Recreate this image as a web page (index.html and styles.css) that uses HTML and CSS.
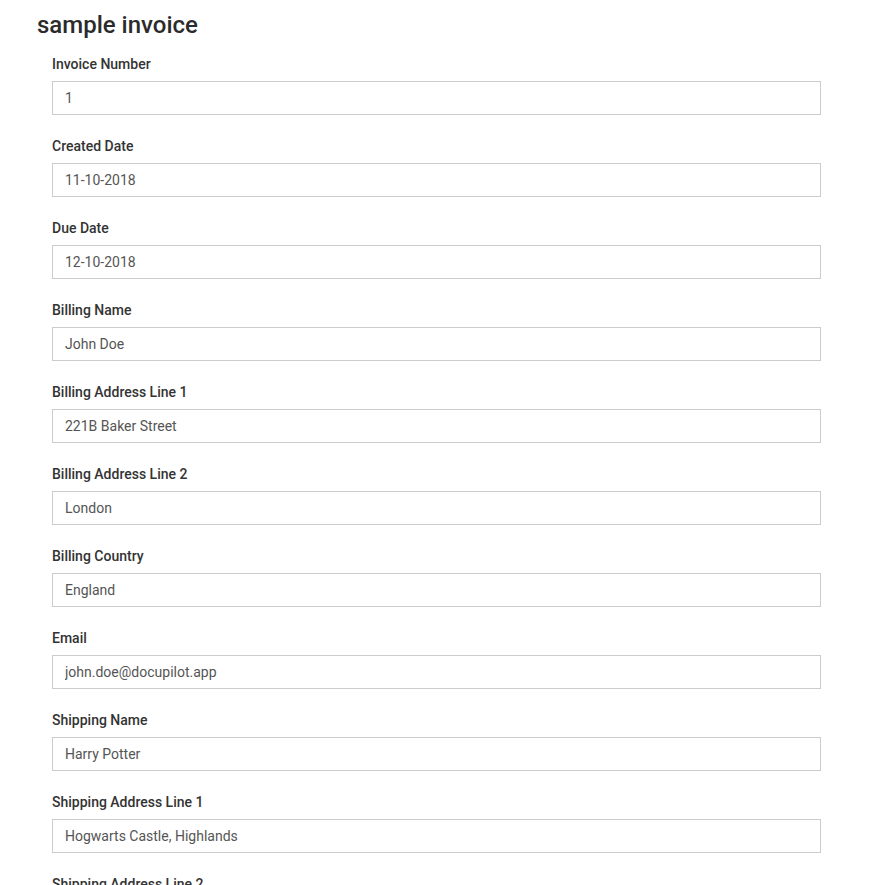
FILE: index.html
```html
<!DOCTYPE html>
<html>
<head>
<meta charset="utf-8">
<link rel="stylesheet" href="styles.css">
</head>
<body>
<main class="page">
  <h1 class="title">sample invoice</h1>
  <form class="form">
    <div class="field"><label class="label">Invoice Number</label><input class="input" value="1"></div>
    <div class="field"><label class="label">Created Date</label><input class="input" value="11-10-2018"></div>
    <div class="field"><label class="label">Due Date</label><input class="input" value="12-10-2018"></div>
    <div class="field"><label class="label">Billing Name</label><input class="input" value="John Doe"></div>
    <div class="field"><label class="label">Billing Address Line 1</label><input class="input" value="221B Baker Street"></div>
    <div class="field"><label class="label">Billing Address Line 2</label><input class="input" value="London"></div>
    <div class="field"><label class="label">Billing Country</label><input class="input" value="England"></div>
    <div class="field"><label class="label">Email</label><input class="input" value="john.doe@docupilot.app"></div>
    <div class="field"><label class="label">Shipping Name</label><input class="input" value="Harry Potter"></div>
    <div class="field"><label class="label">Shipping Address Line 1</label><input class="input" value="Hogwarts Castle, Highlands"></div>
    <div class="field"><label class="label">Shipping Address Line 2</label><input class="input" value=""></div>
  </form>
</main>
</body>
</html>
```
FILE: styles.css
```css
html, body {
  margin: 0;
  padding: 0;
  background: #fff;
}
body {
  font-family: Roboto, "Liberation Sans", sans-serif;
  color: #333;
}
.page {
  padding: 11px 37px 0 37px;
}
.title {
  margin: 0 0 15px 0;
  font-size: 24px;
  line-height: 28px;
  font-weight: 500;
  color: #2b2b2b;
}
.form {
  display: flex;
  flex-direction: column;
  gap: 21px;
  padding-left: 15px;
  width: 769px;
}
.field {
  display: flex;
  flex-direction: column;
  gap: 7px;
}
.label {
  font-size: 14px;
  line-height: 20px;
  font-weight: 500;
  color: #333;
}
.input {
  box-sizing: border-box;
  height: 34px;
  width: 769px;
  margin: 0;
  padding: 0 12px;
  border: 1px solid #ccc;
  border-radius: 0;
  font-family: Roboto, "Liberation Sans", sans-serif;
  font-size: 14px;
  color: #555;
  background: #fff;
  outline: none;
}
```
